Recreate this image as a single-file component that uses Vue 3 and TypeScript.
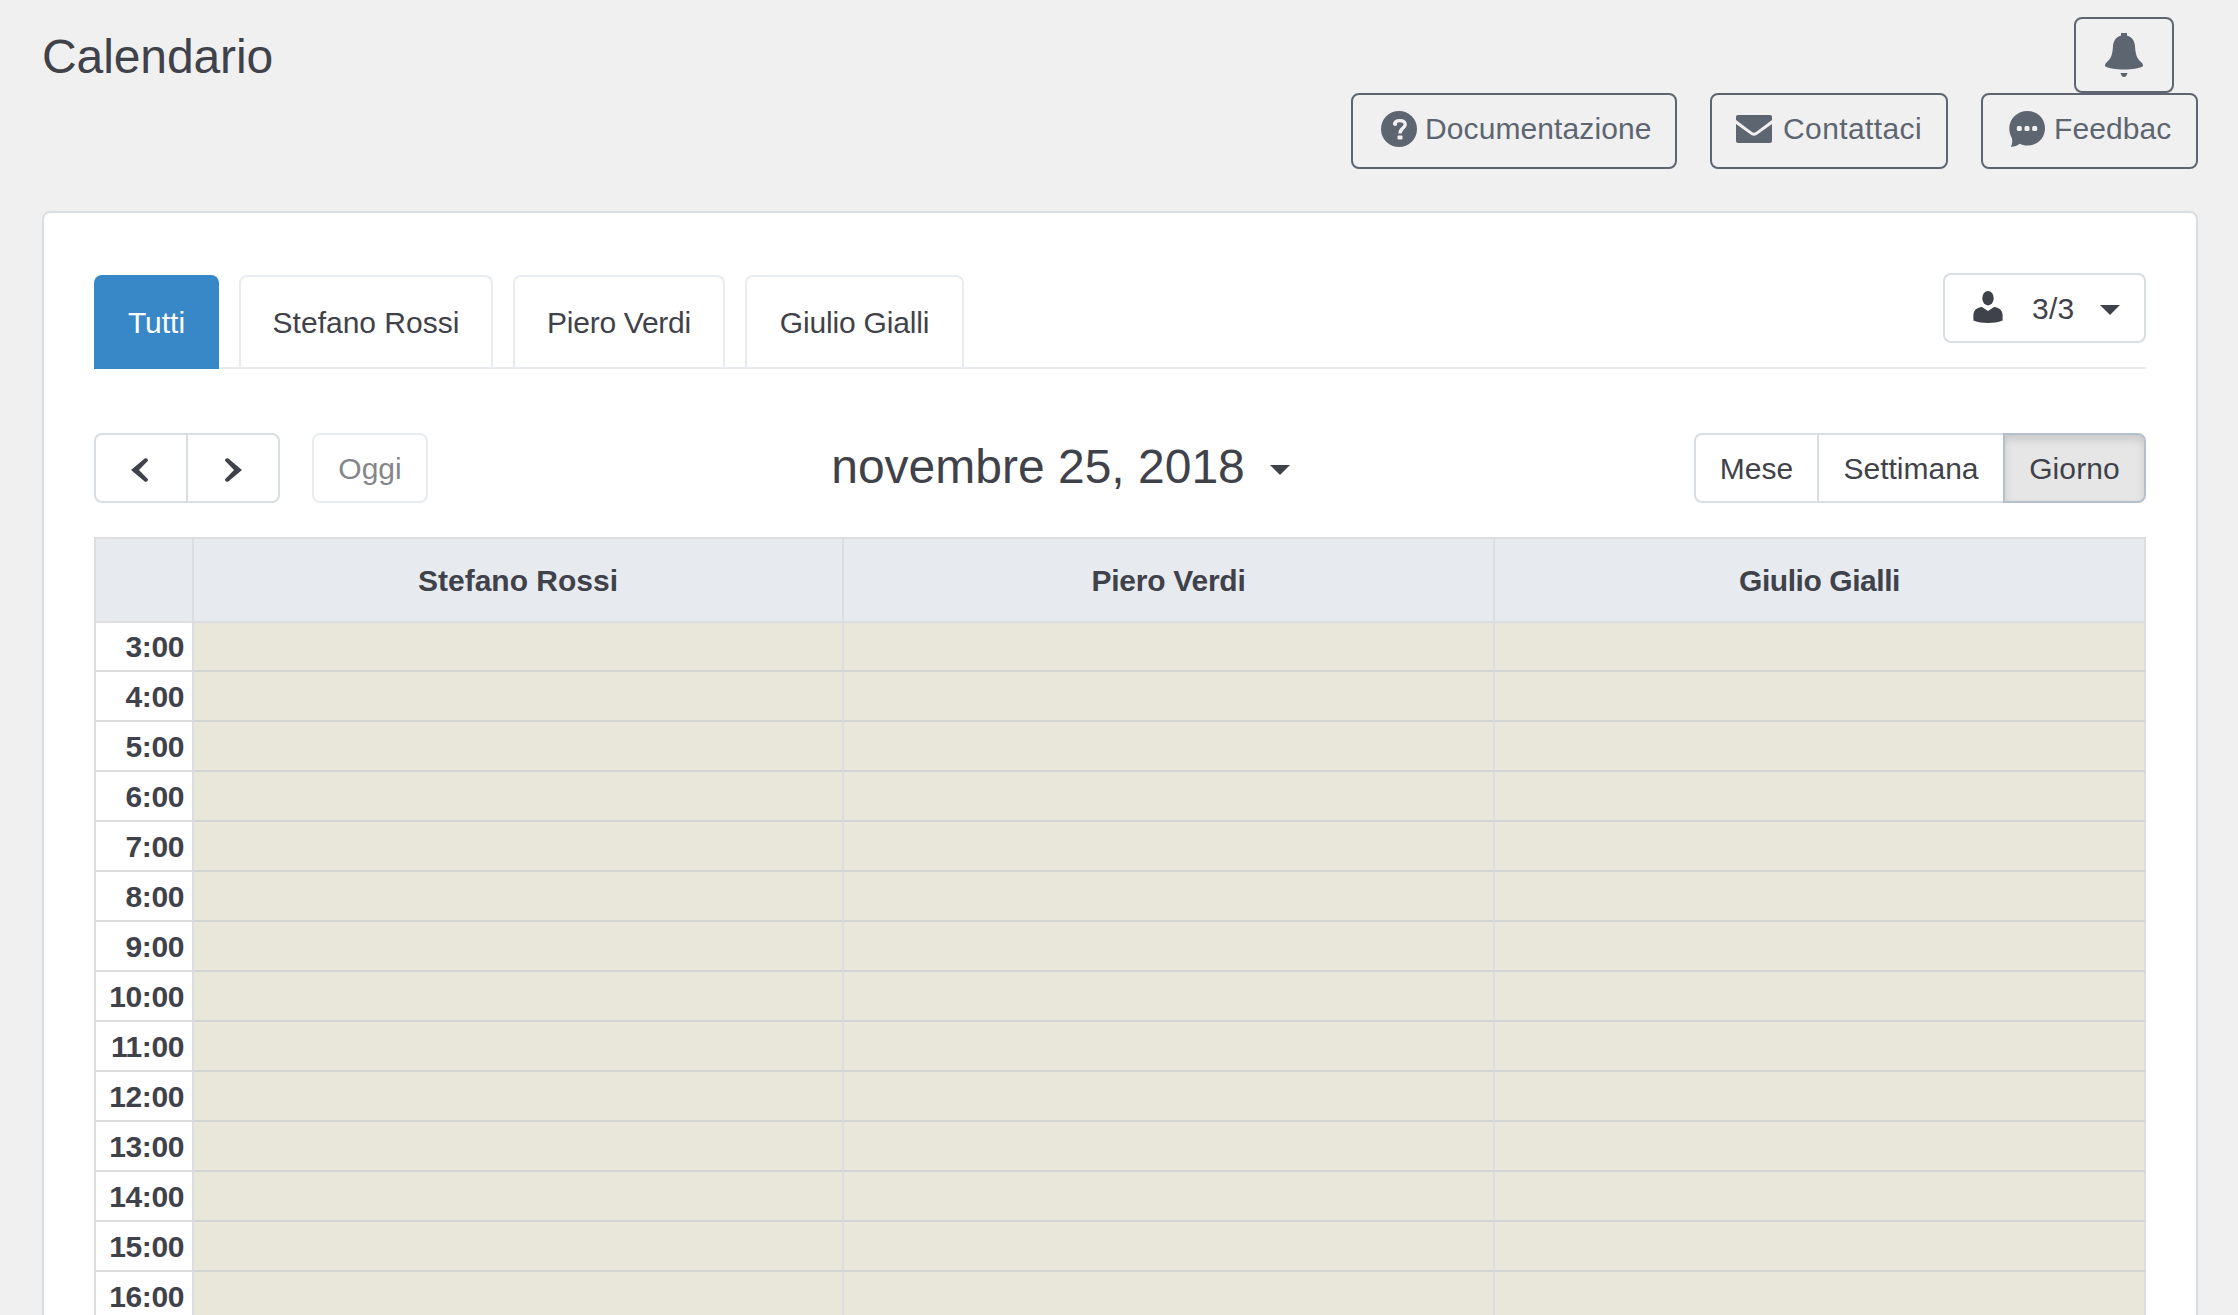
<script setup lang="ts">
interface Operator {
  name: string
  slug: string
}

const operators: Operator[] = [
  { name: 'Stefano Rossi', slug: 'stefano' },
  { name: 'Piero Verdi', slug: 'piero' },
  { name: 'Giulio Gialli', slug: 'giulio' },
]
const hours: string[] = Array.from({ length: 14 }, (_, i) => `${i + 3}:00`)
</script>

<template>
  <div class="page">
    <header class="top">
      <h1 class="title">Calendario</h1>
      <div class="actions">
        <button class="outline bell" aria-label="Notifiche">
          <svg width="38" height="44" viewBox="0 0 38 44">
            <path d="M16 0h6v2.500c5 1.500 7.500 5 8 10.500C30.500 22 32 25.500 36.500 29.500C38 31 38.500 32.500 37.500 33.500C34 35.500 27 36.500 19 36.500S4 35.500 .5 33.500C-.5 32.500 0 31 1.500 29.500C6 25.500 7.500 22 8 13C8.500 7.500 11 4 16 2.500zM15.500 40h7q-1 4-3.500 4t-3.500-4z" />
          </svg>
        </button>
        <div class="links">
          <button class="outline doc">
            <svg width="36" height="36" viewBox="0 0 36 36">
              <circle cx="18" cy="18" r="18" />
              <path class="question" d="M13.600 13.800C13.600 10.800 15.500 9.600 18.700 9.600C22.200 9.600 24.200 11 24.200 13.500C24.200 17 19 17.200 19 22.500" />
              <circle class="light" cx="14.200" cy="13" r="2" />
              <rect class="light" x="16.500" y="24.400" width="5" height="4" rx="1" />
            </svg>
            <span>Documentazione</span>
          </button>
          <button class="outline contact">
            <svg width="36" height="28" viewBox="0 0 36 28">
              <path d="M0 2q0-2 2-2h32q2 0 2 2v3L20 17q-2 1.500-4 0L0 5z" />
              <path d="M0 9l15 10.700q3 2 6 0L36 9v17q0 2-2 2H2q-2 0-2-2z" />
            </svg>
            <span>Contattaci</span>
          </button>
          <button class="outline feedback">
            <svg width="36" height="36" viewBox="0 0 36 36">
              <path d="M18.500 0C28.500 0 36 7.500 36 17.300S28.500 34.600 18.500 34.600C15.500 34.600 12.800 34 10.500 32.800C8.500 34.600 5 36 1.800 35.800C3.200 33.500 3.500 31 3 27.500C1.200 24.500 .3 21 .3 17.300C.3 7.500 8.500 0 18.500 0z" />
              <rect class="light" x="7.800" y="15" width="5" height="5" rx="1.500" />
              <rect class="light" x="15.500" y="15" width="5" height="5" rx="1.500" />
              <rect class="light" x="23.200" y="15" width="5" height="5" rx="1.500" />
            </svg>
            <span>Feedbac</span>
          </button>
        </div>
      </div>
    </header>

    <main class="panel">
      <div class="tabbar">
        <nav class="tabs">
          <a class="tab active">Tutti</a>
          <a v-for="op in operators" :key="op.slug" class="tab" :class="op.slug">{{ op.name }}</a>
        </nav>
        <button class="btn users">
          <svg width="30" height="32" viewBox="0 0 30 32">
            <ellipse cx="15" cy="7.200" rx="5.700" ry="7.200" />
            <path d="M9 16L15 20L21 16C26 16.500 29.500 19 29.600 24V29.500C25 31.300 20 32 15 32S5 31.300 .4 29.500V24C.5 19 4 16.500 9 16z" />
          </svg>
          <span class="count">3/3</span>
          <span class="caret"></span>
        </button>
      </div>

      <div class="toolbar">
        <div class="left">
          <div class="group">
            <button class="btn arrow prev" aria-label="Precedente">
              <svg width="17" height="24" viewBox="0 0 17 24"><path d="M14 0.300Q17 -.5 17 2.800L8 12L17 21.200Q17 24.500 14 23.700L0 12z" /></svg>
            </button>
            <button class="btn arrow" aria-label="Successivo">
              <svg width="17" height="24" viewBox="0 0 17 24"><path d="M3 .3Q0 -.5 0 2.800L9 12L0 21.200Q0 24.500 3 23.700L17 12z" /></svg>
            </button>
          </div>
          <button class="btn today" disabled>Oggi</button>
        </div>
        <h2 class="date">novembre 25, 2018 <span class="caret"></span></h2>
        <div class="group views">
          <button class="btn month">Mese</button>
          <button class="btn week">Settimana</button>
          <button class="btn day">Giorno</button>
        </div>
      </div>

      <section class="calendar">
        <div class="row head">
          <div class="cell"></div>
          <div v-for="op in operators" :key="op.slug" class="cell" :class="op.slug">{{ op.name }}</div>
        </div>
        <div v-for="hour in hours" :key="hour" class="row slot">
          <div class="cell hour">{{ hour }}</div>
          <div v-for="op in operators" :key="op.slug" class="cell closed"></div>
        </div>
      </section>
    </main>
  </div>
</template>

<style>
body {
  background: #f0f0f0;
}
</style>

<style scoped>
.page {
  box-sizing: border-box;
  height: 1315px;
  overflow: hidden;
  padding: 0 40px 0 42px;
  background: #f0f0f0;
  color: #3f424a;
  font: 30px/34px "Liberation Sans", Arial, sans-serif;
}
.page * {
  box-sizing: border-box;
}
button {
  margin: 0;
  font: inherit;
  color: inherit;
  white-space: nowrap;
  display: flex;
}
svg {
  display: block;
  flex: none;
  fill: currentColor;
}
.top {
  display: flex;
  justify-content: space-between;
  height: 211px;
}
.title {
  margin: 30px 0 0;
  font-size: 48px;
  line-height: 54px;
  font-weight: 400;
  letter-spacing: -0.1px;
}
.actions {
  display: flex;
  flex-direction: column;
  align-items: flex-end;
  padding-top: 17px;
  color: #5d6570;
}
.outline {
  height: 76px;
  border: 2px solid #5d6570;
  border-radius: 8px;
  background: none;
  padding: 16px 0 0;
}
.outline span {
  margin-top: 1px;
}
.bell {
  width: 100px;
  margin-right: 24px;
  padding: 14px 0 0;
  justify-content: center;
}
.links {
  display: flex;
  gap: 33px;
}
.doc {
  width: 326px;
  padding-left: 28px;
  gap: 8px;
  letter-spacing: 0.1px;
}
.contact {
  width: 238px;
  padding-left: 24px;
  gap: 11px;
  letter-spacing: 0.4px;
}
.contact svg {
  margin-top: 4px;
}
.feedback {
  width: 217px;
  padding-left: 26px;
  gap: 9px;
  letter-spacing: 0.1px;
}
.light {
  fill: #f0f0f0;
}
.question {
  fill: none;
  stroke: #f0f0f0;
  stroke-width: 3.4;
}
.panel {
  height: 1200px;
  border: 2px solid #d9dee2;
  border-radius: 8px;
  background: #fff;
  padding: 60px 50px 0;
}
.tabbar {
  display: flex;
  justify-content: space-between;
  align-items: flex-start;
  height: 96px;
  border-bottom: 2px solid #e8ecf0;
}
.tabs {
  display: flex;
  gap: 20px;
  padding-top: 2px;
}
.tab {
  height: 92px;
  border: 2px solid #e8ecf0;
  border-bottom: 0;
  border-radius: 8px 8px 0 0;
  padding-top: 29px;
  text-align: center;
  white-space: nowrap;
}
.tab.active {
  width: 125px;
  height: 94px;
  border-color: #3887c6;
  background: #3887c6;
  color: #fff;
}
.tab.stefano {
  width: 254px;
}
.tab.piero {
  width: 212px;
  letter-spacing: -0.27px;
}
.tab.giulio {
  width: 219px;
  letter-spacing: -0.18px;
}
.btn {
  height: 70px;
  border: 2px solid #d9dee3;
  border-radius: 8px;
  background: #fff;
  padding: 17px 0 0;
  justify-content: center;
}
.caret {
  border: 10px solid transparent;
  border-top-color: currentColor;
  border-bottom: 0;
}
.users {
  width: 203px;
  padding-left: 28px;
  justify-content: flex-start;
}
.users svg {
  margin-top: -1px;
}
.count {
  margin-left: 29px;
  letter-spacing: 0.3px;
}
.users .caret {
  margin: 13px 0 0 25px;
}
.toolbar {
  display: flex;
  justify-content: space-between;
  margin-top: 64px;
}
.left,
.group {
  display: flex;
}
.left {
  gap: 32px;
  width: 481px;
}
.group .btn + .btn {
  margin-left: -2px;
}
.group .btn:not(:first-child) {
  border-top-left-radius: 0;
  border-bottom-left-radius: 0;
}
.group .btn:not(:last-child) {
  border-top-right-radius: 0;
  border-bottom-right-radius: 0;
}
.arrow {
  width: 94px;
  padding-top: 23px;
}
.prev {
  padding-right: 3px;
}
.today {
  width: 116px;
  border-color: #e8ecf0;
  color: #85868a;
}
.date {
  display: flex;
  margin: 7px 0 0;
  font-size: 48px;
  line-height: 54px;
  font-weight: 400;
}
.date .caret {
  margin: 25px 0 0 25px;
}
.views {
  width: 600px;
  justify-content: flex-end;
}
.month {
  width: 125px;
}
.week {
  width: 188px;
}
.day {
  width: 143px;
  border-color: #b3bfcd;
  background: #e6e6e6;
  box-shadow: inset 0 5px 9px rgba(0, 0, 0, 0.125);
  letter-spacing: 0.1px;
}
.calendar {
  margin-top: 34px;
  border-left: 2px solid #dcddde;
}
.row {
  display: grid;
  grid-template-columns: 98px 650px 651px 1fr;
}
.cell {
  border-right: 2px solid #dcddde;
}
.head .cell {
  height: 86px;
  border-top: 2px solid #dcddde;
  border-bottom: 2px solid #dcddde;
  padding-top: 25px;
  background: #e7ebf0;
  text-align: center;
  font-weight: 700;
}
.head .piero {
  letter-spacing: -0.25px;
}
.head .giulio {
  letter-spacing: -0.45px;
}
.slot .cell {
  height: 50px;
  border-bottom: 2px solid #dcddde;
}
.head + .slot .cell {
  height: 49px;
}
.slot .hour {
  display: flex;
  align-items: flex-end;
  justify-content: flex-end;
  padding: 0 8px 6px 0;
  font-weight: 700;
  letter-spacing: -0.4px;
}
.slot .closed {
  border-bottom-color: #d2d3d5;
  background: #e9e6da;
}
</style>
